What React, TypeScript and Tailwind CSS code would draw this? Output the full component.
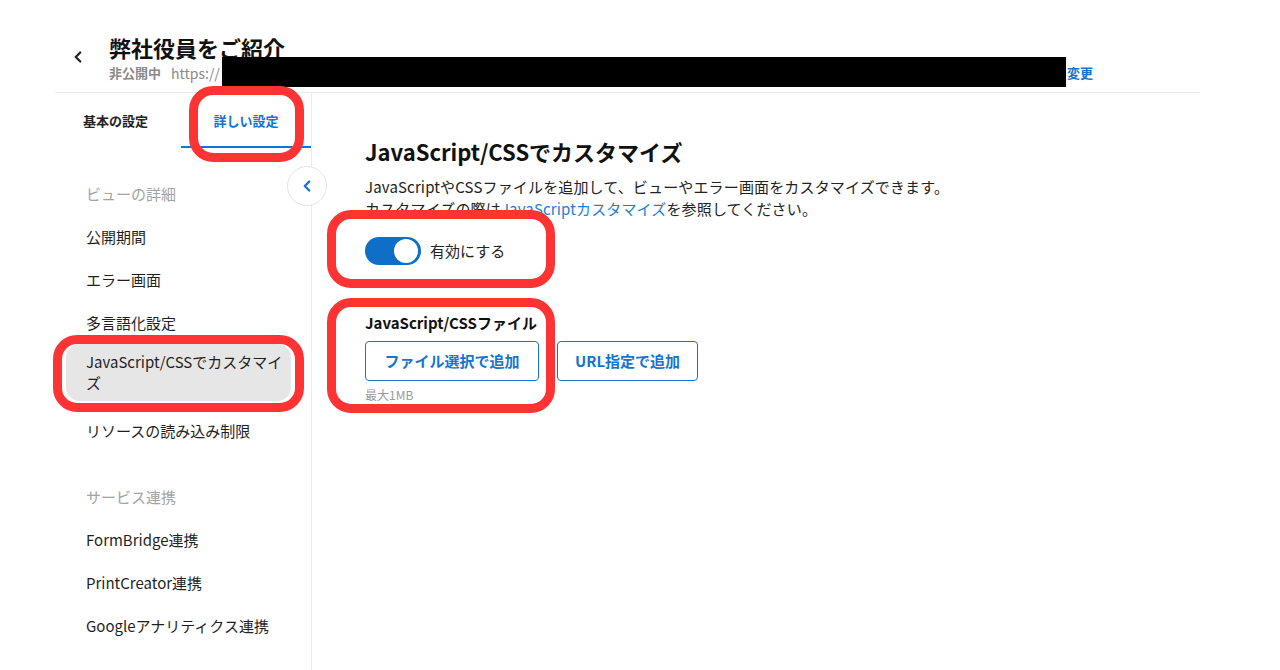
import { ChevronLeft } from "lucide-react";

const FONT = { fontFamily: '"Noto Sans CJK JP", "Noto Sans", sans-serif' };

const VIEW_ITEMS = ["公開期間", "エラー画面", "多言語化設定"];
const SERVICE_ITEMS = ["FormBridge連携", "PrintCreator連携", "Googleアナリティクス連携"];

function Mark({ className }: { className: string }) {
  // red annotation frame drawn over the screenshot
  return (
    <div
      className={`pointer-events-none absolute rounded-[24px] border-[9px] border-[#fe3434] ${className}`}
    />
  );
}

function NavItem({ label }: { label: string }) {
  return <div className="px-[31px] py-[11px] text-[15px] leading-[21px] text-[#1f1f1f]">{label}</div>;
}

export default function App() {
  return (
    <div className="relative h-[670px] w-[1280px] overflow-hidden bg-white" style={FONT}>
      <div className="ml-[55px] w-[1145px]">
        {/* header */}
        <div className="flex items-center border-b border-[#ececec] pb-[10px] pt-[32px]">
          <ChevronLeft className="ml-[14px] h-[18px] w-[18px] text-[#222]" strokeWidth={3} />
          <div className="ml-[22px] flex-1">
            <div className="text-[22px] font-bold leading-[30px] text-[#111]">弊社役員をご紹介</div>
            <div className="mt-[2px] flex items-center text-[13px] leading-[18px] text-[#8a8a8a]">
              <span className="font-bold">非公開中</span>
              <span className="ml-[10px] text-[14px]">https://</span>
              <span className="ml-auto mr-[107px] font-bold text-[#1574d0]">変更</span>
            </div>
          </div>
        </div>

        <div className="flex">
          {/* sidebar */}
          <div className="h-[600px] w-[257px] border-r border-[#ececec]">
            <div className="flex h-[55px] text-[13px] font-bold">
              <div className="flex w-[126px] items-center pl-[28px] text-[#222]">基本の設定</div>
              <div className="flex w-[130px] items-center justify-center border-b-2 border-[#1574d0] pt-[2px] text-[#1574d0]">
                詳しい設定
              </div>
            </div>

            <div className="mt-[35px] px-[31px] text-[15px] leading-[21px] text-[#a3a3a3]">ビューの詳細</div>
            <div className="mt-[10.5px]">
              {VIEW_ITEMS.map((l) => (
                <NavItem key={l} label={l} />
              ))}
              <div className="mb-[8.5px] ml-[11px] mr-[20px] rounded-[14px] bg-[#e6e6e6] py-[7.5px] pl-[20px] pr-[4px] text-[15px] leading-[21px] text-[#1f1f1f]">
                JavaScript/CSSでカスタマイズ
              </div>
              <NavItem label="リソースの読み込み制限" />
            </div>

            <div className="mt-[34px] px-[31px] text-[15px] leading-[21px] text-[#a3a3a3]">サービス連携</div>
            <div className="mt-[11px]">
              {SERVICE_ITEMS.map((l) => (
                <NavItem key={l} label={l} />
              ))}
            </div>
          </div>

          {/* main */}
          <div className="flex-1 pl-[53px] pt-[43px]">
            <h1 className="text-[22px] font-bold leading-[30px] text-[#111]">JavaScript/CSSでカスタマイズ</h1>
            <p className="mt-[10px] text-[15px] leading-[22px] tracking-[0.15px] text-[#222]">
              JavaScriptやCSSファイルを追加して、ビューやエラー画面をカスタマイズできます。
              <br />
              カスタマイズの際は<span className="text-[#1b7fd6]">JavaScriptカスタマイズ</span>を参照してください。
            </p>

            <div className="mt-[17px] flex items-center">
              <div className="flex h-[28px] w-[56px] items-center justify-end rounded-full bg-[#0f6fc6] p-[3px]">
                <div className="h-[24px] w-[24px] rounded-full bg-white" />
              </div>
              <span className="ml-[9px] text-[15px] text-[#222]">有効にする</span>
            </div>

            <div className="mt-[47px] text-[15px] font-bold leading-[21px] text-[#111]">JavaScript/CSSファイル</div>
            <div className="mt-[8px] flex gap-[18px]">
              <button className="h-[40px] w-[174px] rounded-[4px] border border-[#1574d0] text-[15px] font-bold text-[#1574d0]">
                ファイル選択で追加
              </button>
              <button className="h-[40px] w-[141px] rounded-[4px] border border-[#1574d0] text-[15px] font-bold text-[#1574d0]">
                URL指定で追加
              </button>
            </div>
            <div className="mt-[6px] text-[12px] leading-[16px] text-[#9a9a9a]">最大1MB</div>
          </div>
        </div>
      </div>

      {/* collapse button */}
      <div className="absolute left-[287px] top-[166px] flex h-[40px] w-[40px] items-center justify-center rounded-full border border-[#e4e4e4] bg-white">
        <ChevronLeft className="h-[18px] w-[18px] text-[#1574d0]" strokeWidth={3} />
      </div>

      {/* redaction */}
      <div className="absolute left-[222px] top-[57px] h-[30px] w-[844px] bg-black" />

      {/* annotations */}
      <Mark className="left-[189px] top-[86px] h-[76px] w-[115px]" />
      <Mark className="left-[53px] top-[335px] h-[77px] w-[251px]" />
      <Mark className="left-[327px] top-[210px] h-[78px] w-[228px]" />
      <Mark className="left-[327px] top-[298px] h-[115px] w-[228px]" />
    </div>
  );
}
